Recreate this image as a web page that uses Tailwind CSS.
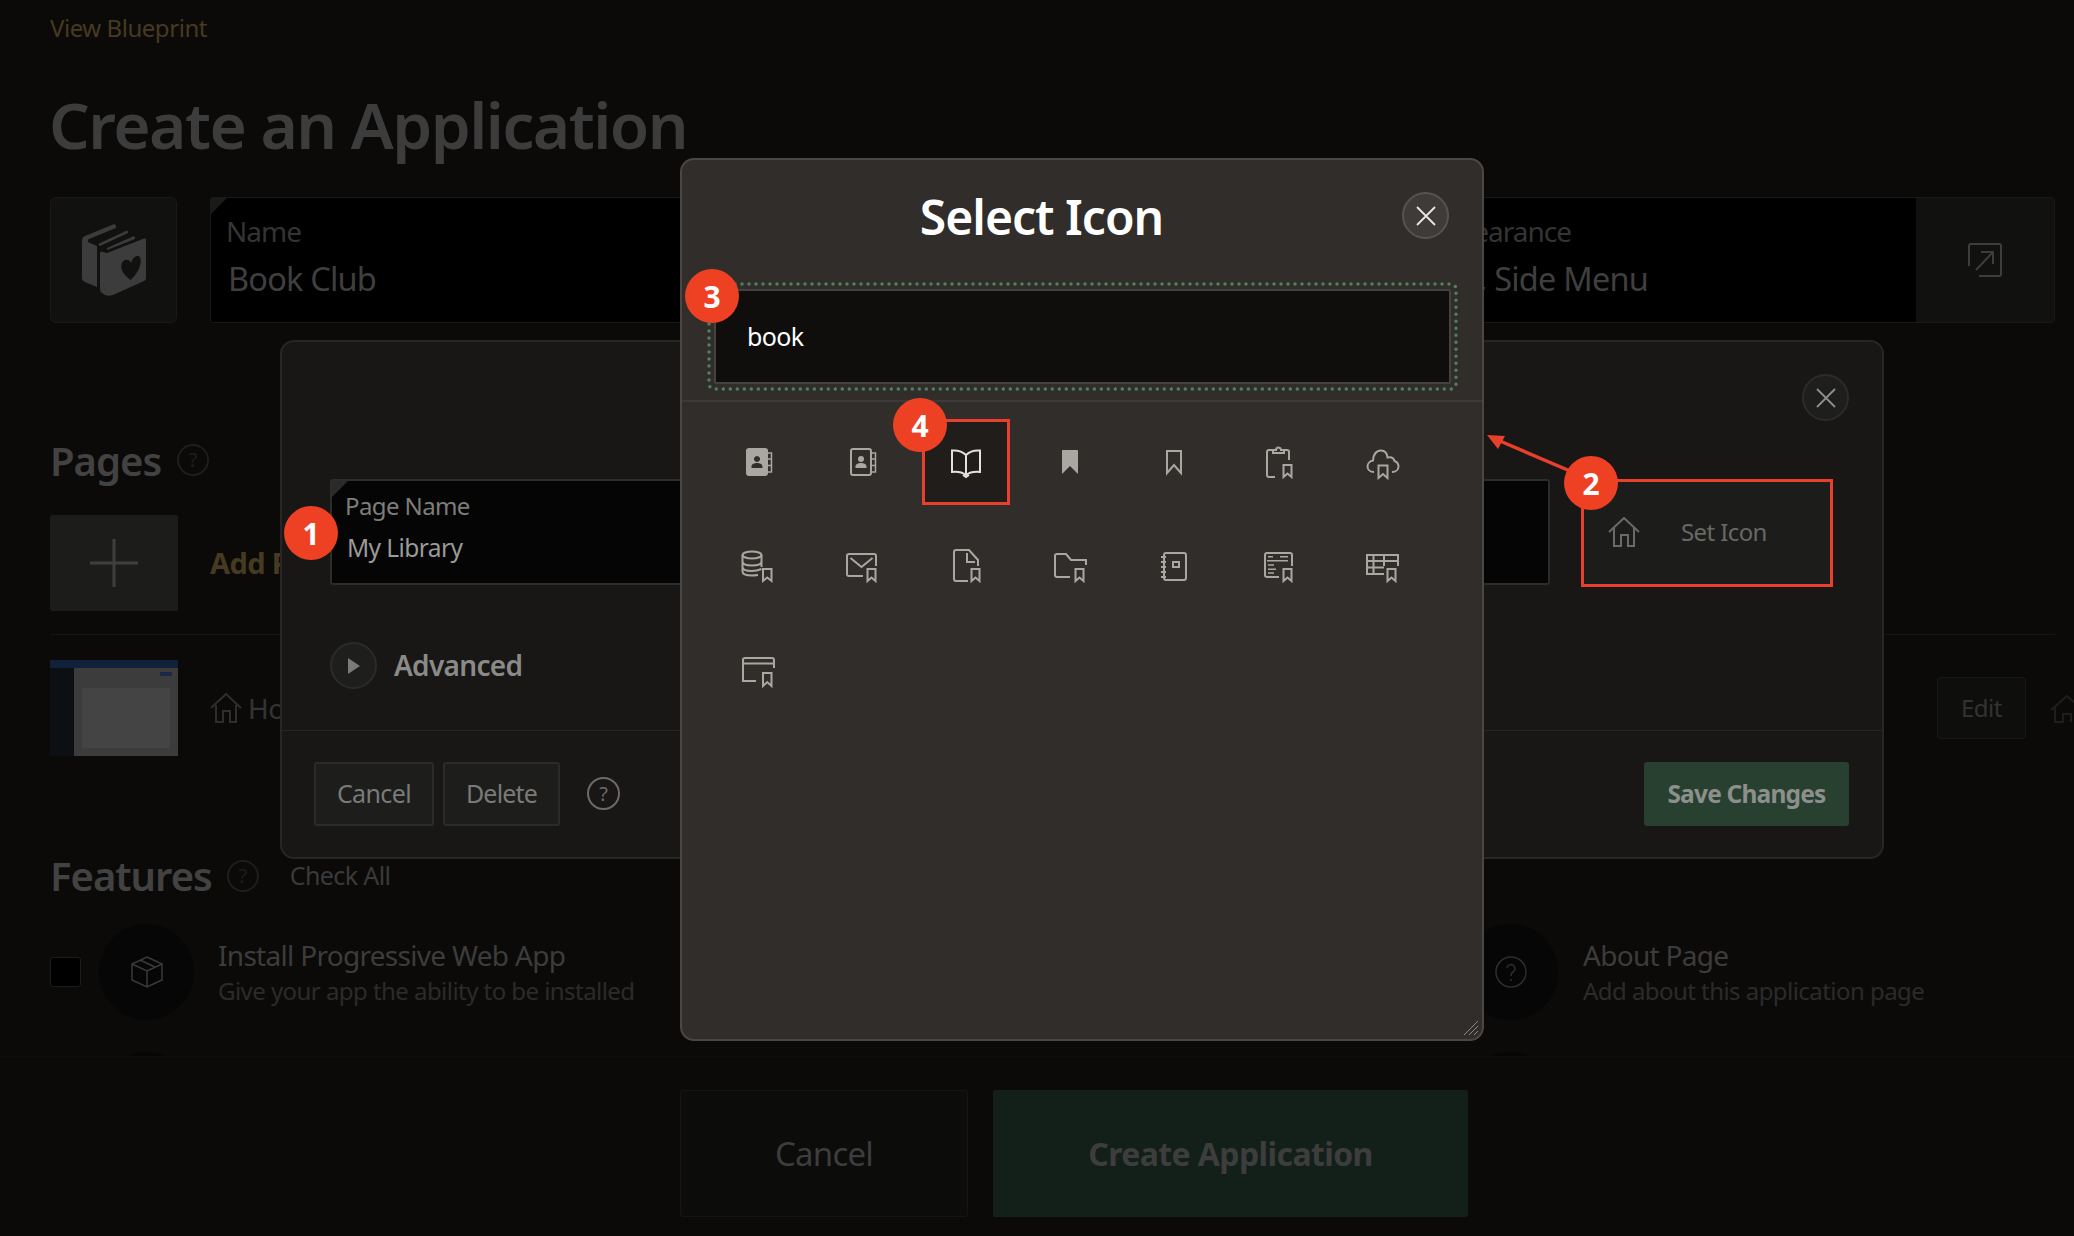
<!DOCTYPE html>
<html lang="en">
<head>
<meta charset="UTF-8">
<title>Select Icon</title>
<script src="https://cdn.jsdelivr.net/npm/@tailwindcss/browser@4"></script>
</head>
<body class="bg-[#0b0a09]">
<div class="relative w-[2074px] h-[1236px] overflow-hidden bg-[#0b0a09] font-['Noto_Sans',sans-serif]">

  <!-- Page behind the dialogs -->
  <div class="h-[1057px] overflow-hidden pl-[50px] pr-[19px] border-b border-[#0d0d0c]">
    <div class="pt-[14px] text-[24px] leading-[28px] tracking-[-0.45px] text-[#463a20]">View Blueprint</div>
    <h1 class="mt-[51px] -ml-[1px] text-[64px] leading-[64px] font-semibold tracking-[-1.55px] text-[#3c3c3c]">Create an Application</h1>

    <div class="mt-[40px] flex gap-[33px] h-[126px]">
      <div class="w-[127px] shrink-0 flex items-center justify-center rounded-[6px] border border-[#191918] bg-[#111110]">
        <svg class="w-[64px] h-[72px]" viewBox="0 0 64 72" fill="#3c3c3c"><path d="M0 17 C0 14 1 13 3 12 L31 0.500 C33 0 34 1 34 3 V4 L7 15 C5 16 6 19 8 19 L15 22 V63 L3 58 C1 57 0 56 0 54Z"/><path d="M16 20 L44 7 C45 6.500 46 7 46 8 V9 L18 22Z"/><path d="M25 24 L51 12.500 C52 12 53 13 53 14 V15 L25 26Z"/><path d="M18 30 C18 28 19 27 21 28 L25 29 L62 14.500 C63 14 64 15 64 16 V54 C64 56 63 56 62 57 L31 71 C28 72 25 72 23 71 L20 69 C19 68 18 67 18 65Z"/><path fill="#111110" d="M48.700 56 C43 52 39 47 39.300 42 C39.500 37 43 35 46 36 C47.500 36.500 48.500 38 49 39 C50 36 52 32.500 55 32 C58 31.500 59 34 58.700 38 C58 45 53 52 48.700 56Z"/></svg>
      </div>
      <div class="relative flex-1 flex bg-black rounded-[3px] border border-[#191918]">
        <span class="absolute left-0 top-0 w-0 h-0 border-t-[16px] border-r-[16px] border-t-[#1a1a19] border-r-transparent"></span>
        <div class="flex-1 pl-[15px] pt-[16px]">
          <div class="text-[28px] leading-[34px] tracking-[-1px] text-[#343434]">Name</div>
          <div class="mt-[13px] pl-[2px] text-[32.5px] leading-[36px] tracking-[-0.8px] text-[#3f3f3f]">Book Club</div>
        </div>
        <div class="w-[492px] pt-[16px]">
          <div class="text-[28px] leading-[34px] tracking-[-1px] text-[#343434]">Appearance</div>
          <div class="mt-[13px] text-[32.5px] leading-[36px] tracking-[-0.8px] text-[#3f3f3f]">Vita, Side Menu</div>
        </div>
        <div class="w-[138px] flex items-center justify-center bg-[#111110]">
          <svg class="w-[36px] h-[36px]" viewBox="0 0 36 36" fill="none" stroke="#3d3d3d" stroke-width="2"><path d="M2 24 V4 a2 2 0 0 1 2 -2 H32 a2 2 0 0 1 2 2 V32 a2 2 0 0 1 -2 2 H12"/><path d="M9 28 L26 10 M14 10 H26 V22"/></svg>
        </div>
      </div>
    </div>

    <div class="mt-[114px] flex items-center gap-[16px] h-[48px]">
      <h2 class="text-[40px] leading-[48px] font-semibold tracking-[-1px] text-[#424242]">Pages</h2>
      <span class="-mt-[2px] w-[32px] h-[32px] rounded-full border-2 border-[#1e1e1d] text-[#1e1e1d] text-[20px] leading-[28px] text-center">?</span>
    </div>
    <div class="mt-[30px] flex items-center gap-[32px] pb-[23px] border-b border-[#151514]">
      <div class="w-[128px] h-[96px] rounded-[2px] bg-[#1c1c1b] flex items-center justify-center">
        <svg class="w-[48px] h-[48px]" viewBox="0 0 48 48" stroke="#3f3f3e" stroke-width="3"><path d="M24 0 V48 M0 24 H48"/></svg>
      </div>
      <span class="text-[29px] font-bold tracking-[-0.6px] text-[#463a20]">Add Page</span>
    </div>
    <div class="mt-[25px] flex items-center gap-[32px] h-[96px]">
      <div class="relative w-[128px] h-[96px] bg-[#0c1014] overflow-hidden">
        <div class="h-[8px] bg-[#12213a]"></div>
        <div class="absolute left-[24px] top-[8px] right-0 bottom-0 bg-[#3c3c3c] pt-[20px] pl-[8px]">
          <div class="w-[88px] h-[60px] bg-[#444444]"></div>
        </div>
        <div class="absolute left-[110px] top-[12px] w-[12px] h-[4px] bg-[#1a2a46]"></div>
      </div>
      <div class="flex items-center gap-[6px]">
        <svg class="w-[32px] h-[30px]" viewBox="0 0 32 30" fill="none" stroke="#2e2e2d" stroke-width="2"><path d="M1 15 L16 1 L31 15 M6 12 V29 H13 V18 H20 V29 H26 V12"/></svg>
        <span class="text-[28px] tracking-[-0.6px] text-[#343434]">Home</span>
      </div>
    </div>

    <div class="mt-[96px] flex items-center h-[48px]">
      <h2 class="text-[40px] leading-[48px] font-semibold tracking-[-1px] text-[#424242]">Features</h2>
      <span class="ml-[15px] w-[32px] h-[32px] rounded-full border-2 border-[#1e1e1d] text-[#1e1e1d] text-[20px] leading-[28px] text-center">?</span>
      <span class="ml-[31px] text-[25px] tracking-[-0.6px] text-[#3a3a3a]">Check All</span>
    </div>
    <div class="mt-[24px] grid grid-cols-[1364px_1fr]">
      <div class="flex items-center h-[96px]">
        <span class="w-[31px] h-[30px] rounded-[3px] border border-[#1c1c1b] bg-black"></span>
        <span class="ml-[18px] w-[95px] h-[96px] rounded-full bg-[#060606] flex items-center justify-center">
          <svg class="w-[32px] h-[32px]" viewBox="0 0 32 32" fill="none" stroke="#3a3a3a" stroke-width="1.5"><path d="M16 1 L31 8 V24 L16 31 L1 24 V8 Z M1 8 L16 15 L31 8 M16 15 V31 M9 4 L24 11"/></svg>
        </span>
        <div class="ml-[24px] pt-[2px]">
          <div class="text-[28px] leading-[36px] tracking-[-0.7px] text-[#3c3c3c]">Install Progressive Web App</div>
          <div class="text-[24px] leading-[36px] tracking-[-0.55px] text-[#2b2b2b]">Give your app the ability to be installed</div>
        </div>
      </div>
      <div class="flex items-center h-[96px]">
        <span class="w-[31px] h-[30px] rounded-[3px] border border-[#1c1c1b] bg-black"></span>
        <span class="ml-[18px] w-[95px] h-[96px] rounded-full bg-[#060606] flex items-center justify-center">
          <svg class="w-[32px] h-[32px]" viewBox="0 0 32 32" fill="none" stroke="#2e2e2d" stroke-width="1.5"><circle cx="16" cy="16" r="15"/><path d="M12 12 a4 4 0 1 1 6 4 c-2 1 -2 2 -2 4 M16 23 v2"/></svg>
        </span>
        <div class="ml-[25px] pt-[2px]">
          <div class="text-[28px] leading-[36px] tracking-[-0.7px] text-[#3c3c3c]">About Page</div>
          <div class="text-[24px] leading-[36px] tracking-[-0.55px] text-[#2b2b2b]">Add about this application page</div>
        </div>
      </div>
    </div>
    <div class="mt-[32px] grid grid-cols-[1364px_1fr]">
      <span class="ml-[49px] w-[95px] h-[96px] rounded-full bg-[#060606]"></span>
      <span class="ml-[49px] w-[95px] h-[96px] rounded-full bg-[#060606]"></span>
    </div>
  </div>

  <div class="mt-[33px] pl-[680px] flex gap-[25px] h-[127px]">
    <div class="w-[288px] rounded-[2px] border border-[#151514] bg-[#0c0c0b] flex items-center justify-center text-[33px] tracking-[-0.8px] text-[#3d3d3d]">Cancel</div>
    <div class="w-[475px] rounded-[2px] bg-[#13201a] flex items-center justify-center text-[32px] font-bold tracking-[-0.6px] text-[#3d3d3d]">Create Application</div>
  </div>

  <!-- Edit button at the far right of the page row -->
  <div class="absolute left-[1937px] top-[677px] w-[89px] h-[62px] rounded-[3px] border border-[#181817] bg-[#0e0e0d] flex items-center justify-center text-[24px] tracking-[-0.5px] text-[#333333]">Edit</div>
  <svg class="absolute left-[2050px] top-[695px] w-[24px] h-[28px]" viewBox="0 0 24 28" fill="none" stroke="#1e1e1d" stroke-width="2"><path d="M1 15 L17 1 L33 15 M5 12 V27 H13 V19 H21 V27"/></svg>

  <!-- Edit page dialog -->
  <div class="absolute left-[280px] top-[340px] w-[1604px] h-[519px] rounded-[14px] border-2 border-[#262625] bg-[#181716] flex flex-col">
    <div class="h-[137px] flex justify-end pt-[32px] pr-[33px]">
      <span class="w-[47px] h-[47px] rounded-full border-2 border-[#2b2b2a] bg-[#1e1e1d] flex items-center justify-center">
        <svg class="w-[20px] h-[20px]" viewBox="0 0 20 20" stroke="#8e8e8c" stroke-width="1.8"><path d="M1 1 L19 19 M19 1 L1 19"/></svg>
      </span>
    </div>
    <div class="pl-[48px] flex h-[106px]">
      <div class="relative w-[1220px] rounded-[3px] border-2 border-[#2c2c2b] bg-[#050505] pl-[13px] pt-[9px]">
        <span class="absolute left-0 top-0 w-0 h-0 border-t-[16px] border-r-[16px] border-t-[#2a2a29] border-r-transparent"></span>
        <div class="text-[24px] leading-[32px] tracking-[-0.6px] text-[#7d7d7b]">Page Name</div>
        <div class="mt-[10px] pl-[2px] text-[24.5px] leading-[32px] tracking-[-0.6px] text-[#9a9a98]">My Library</div>
      </div>
      <div class="ml-[31px] w-[252px] h-[108px] border-[3px] border-[#e8402a] bg-[#1c1c1b] flex items-center pl-[24px] pb-[2px]">
        <svg class="w-[32px] h-[30px]" viewBox="0 0 32 30" fill="none" stroke="#6a6a68" stroke-width="2"><path d="M1 15 L16 1 L31 15 M6 11 V29 H13 V18 H20 V29 H26 V11"/></svg>
        <span class="ml-[41px] text-[24px] tracking-[-0.6px] text-[#686866]">Set Icon</span>
      </div>
    </div>
    <div class="pl-[48px] mt-[57px] flex items-center gap-[17px]">
      <span class="w-[47px] h-[47px] rounded-full border-2 border-[#2b2b2a] bg-[#1e1e1d] flex items-center justify-center">
        <svg class="w-[12px] h-[16px]" viewBox="0 0 12 16" fill="#7a7a78"><path d="M0 0 L12 8 L0 16Z"/></svg>
      </span>
      <span class="text-[28px] leading-[47px] font-semibold tracking-[-0.7px] text-[#8a8a88]">Advanced</span>
    </div>
    <div class="mt-[41px] border-t border-[#262625] flex-1 px-[32px] pt-[31px] flex justify-between">
      <div class="flex items-start">
        <span class="w-[120px] h-[64px] rounded-[3px] border-2 border-[#2b2b29] bg-[#1d1d1c] flex items-center justify-center text-[25px] tracking-[-0.6px] text-[#7a7a78]">Cancel</span>
        <span class="ml-[9px] w-[117px] h-[64px] rounded-[3px] border-2 border-[#2b2b29] bg-[#1d1d1c] flex items-center justify-center text-[25px] tracking-[-0.8px] text-[#7a7a78]">Delete</span>
        <span class="ml-[27px] mt-[15px] w-[33px] h-[33px] rounded-full border-2 border-[#6a6a68] text-[#6a6a68] text-[20px] leading-[29px] text-center">?</span>
      </div>
      <span class="mr-[1px] w-[205px] h-[64px] rounded-[3px] bg-[#274030] flex items-center justify-center text-[24.5px] font-bold tracking-[-0.8px] text-[#8c8f8c]">Save Changes</span>
    </div>
  </div>

  <!-- Select Icon dialog -->
  <div class="absolute left-[680px] top-[158px] w-[804px] h-[883px] rounded-[14px] border-2 border-[#4a4744] bg-[#312d2a] flex flex-col">
    <div class="relative h-[122px] shrink-0">
      <h2 class="pt-[27px] pr-[81px] text-center text-[48px] leading-[60px] font-semibold tracking-[-1px] text-white">Select Icon</h2>
      <span class="absolute left-[720px] top-[32px] w-[47px] h-[47px] rounded-full border-2 border-[#57534f] bg-[#3f3b38] flex items-center justify-center">
        <svg class="w-[20px] h-[20px]" viewBox="0 0 20 20" stroke="#e8e6e3" stroke-width="1.8"><path d="M1 1 L19 19 M19 1 L1 19"/></svg>
      </span>
    </div>
    <!-- dotted focus ring is an svg so the dot spacing can follow the picture -->
    <div class="relative ml-[25px] mr-[24px] h-[109px] shrink-0 p-[7px]">
      <svg class="absolute left-0 top-0 w-[751px] h-[109px]" viewBox="0 0 751 109" fill="none" stroke="#4f8060" stroke-width="3.5" stroke-linecap="round" stroke-dasharray="0 7"><rect x="2" y="2" width="747" height="105" rx="5"/></svg>
      <div class="h-full rounded-[2px] border-2 border-[#44413e] bg-[#0f0e0d] pl-[31px] flex items-center text-[25px] tracking-[-0.6px] text-white">book</div>
    </div>
    <div class="mt-[9px] border-t-2 border-[#3d3936] pt-[17px] pl-[32px] grid grid-cols-[repeat(7,88px)] auto-rows-[86px] gap-x-[16px] gap-y-[18px]">
      <!-- row 1 -->
      <div class="flex items-center justify-center"><svg class="w-[36px] h-[36px]" viewBox="0 0 36 36" fill="#aaa7a3"><path fill-rule="evenodd" d="M9 4 H25 a3 3 0 0 1 3 3 V29 a3 3 0 0 1 -3 3 H9 a3 3 0 0 1 -3 -3 V7 a3 3 0 0 1 3 -3Z M17 12 a3 3 0 1 0 0.010 0Z M11.500 24 H22.500 V22.500 C22.500 20 19.500 19 17 19 C14.500 19 11.500 20 11.500 22.500Z"/><path fill="none" stroke="#aaa7a3" stroke-width="1.5" d="M28 9 H31.500 V15 H28 M31.500 15 V21.500 H28 M31.500 21.500 V28 H28"/></svg></div>
      <div class="flex items-center justify-center"><svg class="w-[36px] h-[36px]" viewBox="0 0 36 36" fill="none" stroke="#aaa7a3" stroke-width="2"><rect x="7" y="5" width="20" height="26" rx="2"/><path stroke-width="1.500" d="M27 9 H31.500 V15 H27 M31.500 15 V21.500 H27 M31.500 21.500 V28 H27"/><circle cx="17" cy="15" r="3" fill="#aaa7a3" stroke="none"/><path fill="#aaa7a3" stroke="none" d="M11.500 24 H22.500 V22.500 C22.500 20 19.500 19 17 19 C14.500 19 11.500 20 11.500 22.500Z"/></svg></div>
      <div class="flex items-center justify-center rounded-none border-[3px] border-[#e8402a] bg-[#201d1b]"><svg class="w-[36px] h-[36px]" viewBox="0 0 36 36" fill="none" stroke="#e4e2df" stroke-width="2"><path d="M18 11 C15 8 10 6 4 6.500 V28 C9 27.500 14 28 18 31 C22 28 27 27.500 32 28 V6.500 C26 6 21 8 18 11Z M18 11 V31"/><path d="M15 31 L18 33 L21 31"/></svg></div>
      <div class="flex items-center justify-center"><svg class="w-[36px] h-[36px]" viewBox="0 0 36 36" fill="#aaa7a3"><path d="M11 6 H25 a1 1 0 0 1 1 1 V30 L18 22 L10 30 V7 a1 1 0 0 1 1 -1Z"/></svg></div>
      <div class="flex items-center justify-center"><svg class="w-[36px] h-[36px]" viewBox="0 0 36 36" fill="none" stroke="#aaa7a3" stroke-width="2"><path d="M11 7 H25 V29 L18 21 L11 29Z"/></svg></div>
      <div class="flex items-center justify-center"><svg class="w-[36px] h-[36px]" viewBox="0 0 36 36" fill="none" stroke="#aaa7a3" stroke-width="2"><path d="M13 6 H9 a2 2 0 0 0 -2 2 V31 a2 2 0 0 0 2 2 H15 M24 6 H27 a2 2 0 0 1 2 2 V16"/><path d="M13 9 V6 H16 a2.500 2.500 0 0 1 5 0 H24 V9Z"/><path d="M23.500 21 H31.500 V33 L27.500 29.500 L23.500 33Z"/></svg></div>
      <div class="flex items-center justify-center"><svg class="w-[36px] h-[36px]" viewBox="0 0 36 36" fill="none" stroke="#aaa7a3" stroke-width="2"><path d="M10 28 C6 28 3.500 25.500 3.500 22.500 C3.500 19.500 6 17 9 16.500 C9 10.500 12.500 6.500 17 6.500 C20.500 6.500 23 9 23.500 13.500 C28 12.500 30 15 30.500 17 C33 18 34.500 20 34.500 22.500 C34.500 25.500 32 28 28 28"/><path d="M14.500 21.500 H23.500 V34 L19 30 L14.500 34Z"/></svg></div>
      <!-- row 2 -->
      <div class="flex items-center justify-center"><svg class="w-[36px] h-[36px]" viewBox="0 0 36 36" fill="none" stroke="#aaa7a3" stroke-width="2"><ellipse cx="12" cy="7" rx="9.500" ry="3.500"/><path d="M2.500 7 V23.500 C2.500 26.500 7 27.500 12 27.500 C14 27.500 16 27.300 18 27 M21.500 7 V19 M2.500 13.500 C2.500 16.500 7 17.500 12 17.500 C17 17.500 21.500 16.500 21.500 13.500 M2.500 19 C2.500 22 7 23 12 23 C15 23 18 22.500 21.500 21"/><path d="M23 21 H31.500 V33 L27.250 29.500 L23 33Z"/></svg></div>
      <div class="flex items-center justify-center"><svg class="w-[36px] h-[36px]" viewBox="0 0 36 36" fill="none" stroke="#aaa7a3" stroke-width="2"><path d="M19 28 H5 a2 2 0 0 1 -2 -2 V8 a2 2 0 0 1 2 -2 H30 a2 2 0 0 1 2 2 V18 M6.500 10 L17.500 19 L28.500 10"/><path d="M23.500 21 H31.500 V33 L27.500 29.500 L23.500 33Z"/></svg></div>
      <div class="flex items-center justify-center"><svg class="w-[36px] h-[36px]" viewBox="0 0 36 36" fill="none" stroke="#aaa7a3" stroke-width="2"><path d="M20 33 H8 a2 2 0 0 1 -2 -2 V4 a2 2 0 0 1 2 -2 H21 L30 12 V18 M19 5 V14 H27"/><path d="M23.500 21 H31.500 V33 L27.500 29.500 L23.500 33Z"/></svg></div>
      <div class="flex items-center justify-center"><svg class="w-[36px] h-[36px]" viewBox="0 0 36 36" fill="none" stroke="#aaa7a3" stroke-width="2"><path d="M18 29 H5 a2 2 0 0 1 -2 -2 V8 a2 2 0 0 1 2 -2 H14 L19 12 H34 V17"/><path d="M23.500 21 H31.500 V33 L27.500 29.500 L23.500 33Z"/></svg></div>
      <div class="flex items-center justify-center"><svg class="w-[36px] h-[36px]" viewBox="0 0 36 36" fill="none" stroke="#aaa7a3" stroke-width="2"><rect x="8" y="5" width="22" height="27" rx="2"/><path d="M5 9 H10 M5 14 H10 M5 19 H10 M5 24 H10 M5 29 H10"/><rect x="17" y="14" width="6" height="5"/></svg></div>
      <div class="flex items-center justify-center"><svg class="w-[36px] h-[36px]" viewBox="0 0 36 36" fill="none" stroke="#aaa7a3" stroke-width="2"><path d="M19 29 H7 a2 2 0 0 1 -2 -2 V7 a2 2 0 0 1 2 -2 H30 a2 2 0 0 1 2 2 V18"/><path stroke-width="1.500" d="M8 8.700 H13 M20 8.700 H28 M7 12.700 H28 M8 17 H14 M8 21.300 H16 M8 25 H14"/><path d="M23.500 21 H31.500 V33 L27.500 29.500 L23.500 33Z"/></svg></div>
      <div class="flex items-center justify-center"><svg class="w-[36px] h-[36px]" viewBox="0 0 36 36" fill="none" stroke="#aaa7a3" stroke-width="2"><path d="M20 26 H3 V7 H34 V18 M3 13 H34 M3 19.500 H20 M9.500 7 V26 M20 7 V18"/><path d="M23.500 21 H31.500 V33 L27.500 29.500 L23.500 33Z"/></svg></div>
      <!-- row 3 -->
      <div class="flex items-center justify-center"><svg class="w-[36px] h-[36px]" viewBox="0 0 36 36" fill="none" stroke="#aaa7a3" stroke-width="2"><path d="M16 29 H3 V8 a2 2 0 0 1 2 -2 H32 a2 2 0 0 1 2 2 V16 M3 11.500 H34"/><path d="M23 21 H31.500 V34 L27.250 30 L23 34Z"/></svg></div>
    </div>
    <svg class="absolute right-[3px] bottom-[3px] w-[16px] h-[16px]" viewBox="0 0 16 16" stroke="#8b8784" stroke-width="1"><path d="M1 15 L15 1 M6 15 L15 6 M11 15 L15 11"/></svg>
  </div>

  <!-- Arrow from badge 2 back to the dialog -->
  <svg class="absolute left-[1480px] top-[428px] w-[100px] h-[50px]" viewBox="0 0 100 50" fill="#e8402a" stroke="none"><path d="M7 7 L25 8 L18 21Z"/><path d="M20 13 L90 43" stroke="#e8402a" stroke-width="3.500"/></svg>

  <!-- Numbered callouts -->
  <span class="absolute left-[284px] top-[506px] w-[54px] h-[54px] rounded-full bg-[#ee4124] flex items-center justify-center text-[30px] font-bold text-white">1</span>
  <span class="absolute left-[1564px] top-[456px] w-[54px] h-[54px] rounded-full bg-[#ee4124] flex items-center justify-center text-[30px] font-bold text-white">2</span>
  <span class="absolute left-[685px] top-[269px] w-[54px] h-[54px] rounded-full bg-[#ee4124] flex items-center justify-center text-[30px] font-bold text-white">3</span>
  <span class="absolute left-[893px] top-[398px] w-[54px] h-[54px] rounded-full bg-[#ee4124] flex items-center justify-center text-[30px] font-bold text-white">4</span>
</div>
</body>
</html>
